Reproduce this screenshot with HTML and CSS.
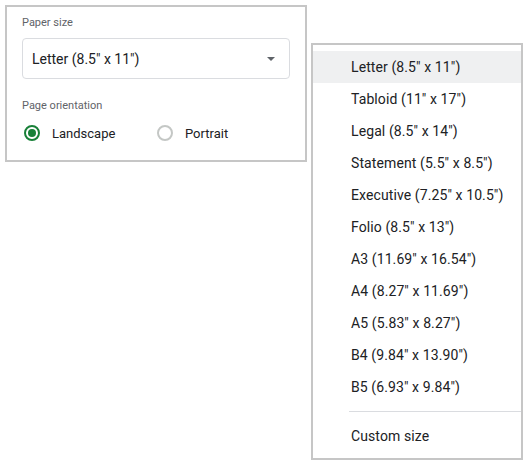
FILE: index.html
```html
<!DOCTYPE html>
<html lang="en">
<head>
    <meta charset="UTF-8">
    <title>Page setup</title>
    <link rel="stylesheet" href="styles.css">
</head>
<body>
    <div class="setup-panel">
        <div class="field-label">Paper size</div>
        <div class="select-box">
            <span class="select-value">Letter (8.5" x 11")</span>
            <span class="select-arrow"></span>
        </div>
        <div class="field-label orientation-label">Page orientation</div>
        <div class="radio-row">
            <label class="radio-option">
                <span class="radio checked"></span>
                <span>Landscape</span>
            </label>
            <label class="radio-option">
                <span class="radio"></span>
                <span>Portrait</span>
            </label>
        </div>
    </div>

    <ul class="size-menu">
        <li class="menu-item active">Letter (8.5" x 11")</li>
        <li class="menu-item">Tabloid (11" x 17")</li>
        <li class="menu-item">Legal (8.5" x 14")</li>
        <li class="menu-item">Statement (5.5" x 8.5")</li>
        <li class="menu-item">Executive (7.25" x 10.5")</li>
        <li class="menu-item">Folio (8.5" x 13")</li>
        <li class="menu-item">A3 (11.69" x 16.54")</li>
        <li class="menu-item">A4 (8.27" x 11.69")</li>
        <li class="menu-item">A5 (5.83" x 8.27")</li>
        <li class="menu-item">B4 (9.84" x 13.90")</li>
        <li class="menu-item">B5 (6.93" x 9.84")</li>
        <li class="menu-separator"></li>
        <li class="menu-item">Custom size</li>
    </ul>
</body>
</html>
```

FILE: styles.css
```css
body {
    margin: 0;
    padding: 5px;
    font-family: Roboto, "Liberation Sans", Arial, sans-serif;
    color: #202124;
    background: #fff;
}
.setup-panel {
    box-sizing: border-box;
    width: 302px;
    border: 2px solid #c6c6c6;
    padding: 8px 15px 15px 15px;
}
.field-label {
    font-size: 11px;
    line-height: 16px;
    color: #5f6368;
}
.select-box {
    box-sizing: border-box;
    display: flex;
    align-items: center;
    justify-content: space-between;
    width: 268px;
    height: 41px;
    margin-top: 7px;
    padding: 0 14px 0 9px;
    border: 1px solid #dadce0;
    border-radius: 4px;
    font-size: 14px;
}
.select-arrow {
    width: 0;
    height: 0;
    border-left: 4px solid transparent;
    border-right: 4px solid transparent;
    border-top: 4px solid #5f6368;
}
.orientation-label {
    margin-top: 19px;
}
.radio-row {
    display: flex;
    margin-top: 7px;
    height: 24px;
    align-items: center;
    font-size: 13px;
}
.radio-option {
    display: flex;
    align-items: center;
    gap: 12px;
    width: 134px;
    margin-left: 2px;
}
.radio-option + .radio-option {
    margin-left: 0;
}
.radio {
    box-sizing: border-box;
    width: 16px;
    height: 16px;
    border: 2px solid #c4c7c5;
    border-radius: 50%;
    position: relative;
}
.radio.checked {
    border-color: #188038;
}
.radio.checked::after {
    content: "";
    position: absolute;
    left: 2px;
    top: 2px;
    width: 8px;
    height: 8px;
    border-radius: 50%;
    background: #188038;
}
.size-menu {
    position: absolute;
    left: 311px;
    top: 43px;
    width: 212px;
    box-sizing: border-box;
    margin: 0;
    padding: 6px 0;
    list-style: none;
    border: 2px solid #c6c6c6;
    background: #fff;
    font-size: 14px;
}
.menu-item {
    height: 32px;
    line-height: 32px;
    padding-left: 38px;
    letter-spacing: 0.1px;
}
.menu-item.active {
    background: #eff0f1;
}
.menu-separator {
    height: 1px;
    margin: 8px 0 8px 36px;
    background: #dadce0;
}
```
